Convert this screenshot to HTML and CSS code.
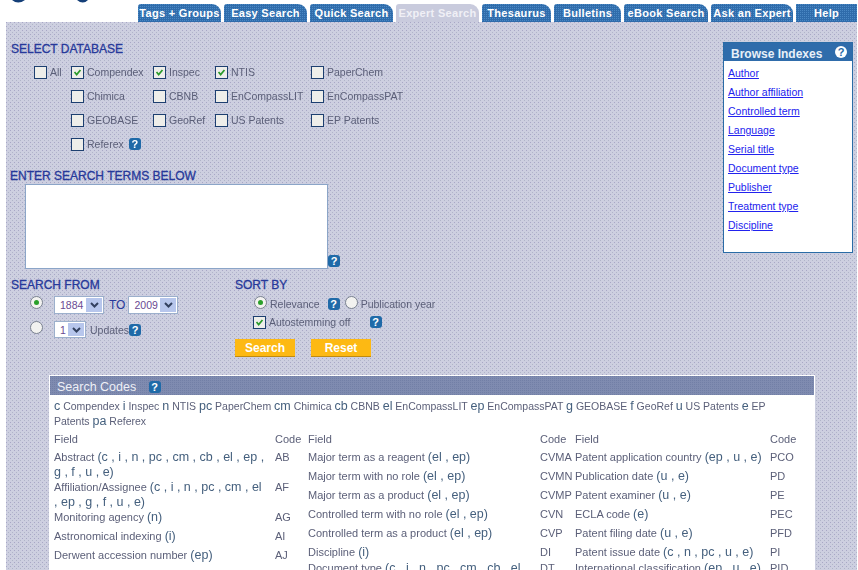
FILE: index.html
```html
<!DOCTYPE html>
<html lang="en">
<head>
    <meta charset="UTF-8">
    <title>Expert Search</title>
    <link rel="stylesheet" href="styles.css">
</head>
<body>
<div class="top">
    <svg class="logo" width="132" height="22" viewBox="0 0 132 22">
        <path d="M6 0 Q12 5 19 0Z M71 0 Q77 5 82 0Z" fill="#143f78"/>
    </svg>
    <div class="tabs">
        <a class="tab">Tags + Groups</a>
        <a class="tab">Easy Search</a>
        <a class="tab">Quick Search</a>
        <a class="tab tab-on">Expert Search</a>
        <a class="tab tab-thes">Thesaurus</a>
        <a class="tab tab-bull">Bulletins</a>
        <a class="tab tab-ebook">eBook Search</a>
        <a class="tab tab-ask">Ask an Expert</a>
        <a class="tab tab-help">Help</a>
    </div>
</div>

<div class="page">
    <div class="upper">
        <div class="form">
            <h2 class="head">SELECT DATABASE</h2>
            <div class="dbs">
                <label class="db"><span class="check"></span>All</label>
                <label class="db"><span class="check"><svg viewBox="0 0 13 13"><path d="M3 6l2.5 3L10 3.5" fill="none" stroke="#2a9a2a" stroke-width="2"/></svg></span>Compendex</label>
                <label class="db"><span class="check"><svg viewBox="0 0 13 13"><path d="M3 6l2.5 3L10 3.5" fill="none" stroke="#2a9a2a" stroke-width="2"/></svg></span>Inspec</label>
                <label class="db"><span class="check"><svg viewBox="0 0 13 13"><path d="M3 6l2.5 3L10 3.5" fill="none" stroke="#2a9a2a" stroke-width="2"/></svg></span>NTIS</label>
                <label class="db"><span class="check"></span>PaperChem</label>

                <span></span>
                <label class="db"><span class="check"></span>Chimica</label>
                <label class="db"><span class="check"></span>CBNB</label>
                <label class="db"><span class="check"></span>EnCompassLIT</label>
                <label class="db"><span class="check"></span>EnCompassPAT</label>

                <span></span>
                <label class="db"><span class="check"></span>GEOBASE</label>
                <label class="db"><span class="check"></span>GeoRef</label>
                <label class="db"><span class="check"></span>US Patents</label>
                <label class="db"><span class="check"></span>EP Patents</label>

                <span></span>
                <label class="db db-wide"><span class="check"></span>Referex <span class="help">?</span></label>
            </div>

            <h2 class="head head-terms">ENTER SEARCH TERMS BELOW</h2>
            <div class="terms">
                <textarea class="box"></textarea>
                <span class="help">?</span>
            </div>

            <div class="limits">
                <div class="from">
                    <h2 class="head">SEARCH FROM</h2>
                    <div class="line line-years">
                        <span class="radio radio-on"></span>
                        <div class="select select-year"><span>1884</span><i class="arrow"><svg width="9" height="6" viewBox="0 0 9 6"><path d="M1 1l3.5 3.5L8 1" fill="none" stroke="#33415f" stroke-width="2"/></svg></i></div>
                        <span class="to">TO</span>
                        <div class="select select-year"><span>2009</span><i class="arrow"><svg width="9" height="6" viewBox="0 0 9 6"><path d="M1 1l3.5 3.5L8 1" fill="none" stroke="#33415f" stroke-width="2"/></svg></i></div>
                    </div>
                    <div class="line line-updates">
                        <span class="radio"></span>
                        <div class="select select-num"><span>1</span><i class="arrow"><svg width="9" height="6" viewBox="0 0 9 6"><path d="M1 1l3.5 3.5L8 1" fill="none" stroke="#33415f" stroke-width="2"/></svg></i></div>
                        <span class="lbl lbl-upd">Updates</span><span class="help">?</span>
                    </div>
                </div>
                <div class="sort">
                    <h2 class="head">SORT BY</h2>
                    <div class="sort-line sort-first">
                        <span class="radio radio-on"></span><span class="lbl lbl-rel">Relevance</span>
                        <span class="help">?</span>
                        <span class="radio radio-pub"></span><span class="lbl">Publication year</span>
                    </div>
                    <div class="sort-line sort-stem">
                        <span class="check"><svg viewBox="0 0 13 13"><path d="M3 6l2.5 3L10 3.5" fill="none" stroke="#2a9a2a" stroke-width="2"/></svg></span><span class="lbl lbl-stem">Autostemming off</span>
                        <span class="help">?</span>
                    </div>
                    <div class="btns">
                        <button class="btn">Search</button>
                        <button class="btn">Reset</button>
                    </div>
                </div>
            </div>
        </div>

        <aside class="browse">
            <div class="browse-top">Browse Indexes <span class="help help-white">?</span></div>
            <a href="#">Author</a>
            <a href="#">Author affiliation</a>
            <a href="#">Controlled term</a>
            <a href="#">Language</a>
            <a href="#">Serial title</a>
            <a href="#">Document type</a>
            <a href="#">Publisher</a>
            <a href="#">Treatment type</a>
            <a href="#">Discipline</a>
        </aside>
    </div>

    <section class="codes">
        <div class="codes-top">Search Codes <span class="help">?</span></div>
        <p class="legend"><b>c</b> Compendex <b>i</b> Inspec <b>n</b> NTIS <b>pc</b> PaperChem <b>cm</b> Chimica <b>cb</b> CBNB <b>el</b> EnCompassLIT <b>ep</b> EnCompassPAT <b>g</b> GEOBASE <b>f</b> GeoRef <b>u</b> US Patents <b>e</b> EP Patents <b>pa</b> Referex</p>
        <div class="cols">
            <div class="col col-a">
                <span class="th">Field</span><span class="th">Code</span>
                <span class="f">Abstract <b>(c , i , n , pc , cm , cb , el , ep ,<br>g , f , u , e)</b></span><span class="c">AB</span>
                <span class="f">Affiliation/Assignee <b>(c , i , n , pc , cm , el<br>, ep , g , f , u , e)</b></span><span class="c">AF</span>
                <span class="f">Monitoring agency <b>(n)</b></span><span class="c">AG</span>
                <span class="f">Astronomical indexing <b>(i)</b></span><span class="c">AI</span>
                <span class="f">Derwent accession number <b>(ep)</b></span><span class="c">AJ</span>
            </div>
            <div class="col col-b">
                <span class="th">Field</span><span class="th">Code</span>
                <span class="f">Major term as a reagent <b>(el , ep)</b></span><span class="c">CVMA</span>
                <span class="f">Major term with no role <b>(el , ep)</b></span><span class="c">CVMN</span>
                <span class="f">Major term as a product <b>(el , ep)</b></span><span class="c">CVMP</span>
                <span class="f">Controlled term with no role <b>(el , ep)</b></span><span class="c">CVN</span>
                <span class="f">Controlled term as a product <b>(el , ep)</b></span><span class="c">CVP</span>
                <span class="f short">Discipline <b>(i)</b></span><span class="c short">DI</span>
                <span class="f">Document type <b>(c , i , n , pc , cm , cb , el</b></span><span class="c">DT</span>
            </div>
            <div class="col col-c">
                <span class="th">Field</span><span class="th">Code</span>
                <span class="f">Patent application country <b>(ep , u , e)</b></span><span class="c">PCO</span>
                <span class="f">Publication date <b>(u , e)</b></span><span class="c">PD</span>
                <span class="f">Patent examiner <b>(u , e)</b></span><span class="c">PE</span>
                <span class="f">ECLA code <b>(e)</b></span><span class="c">PEC</span>
                <span class="f">Patent filing date <b>(u , e)</b></span><span class="c">PFD</span>
                <span class="f short">Patent issue date <b>(c , n , pc , u , e)</b></span><span class="c short">PI</span>
                <span class="f">International classification <b>(ep , u , e)</b></span><span class="c">PID</span>
            </div>
        </div>
    </section>
</div>
</body>
</html>
```

FILE: styles.css
```css
html, body {
    margin: 0;
    height: 570px;
    overflow: hidden;
    background: #fff;
}
body {
    font-family: "Liberation Sans", Arial, sans-serif;
    font-size: 10.5px;
    color: #5b5f78;
}

/* top bar */
.top {
    display: flex;
    height: 22px;
}
.logo {
    margin-left: 6px;
    flex: none;
}
.tabs {
    display: flex;
    gap: 3px;
    padding-top: 4px;
}
.tab {
    width: 83px;
    height: 18px;
    line-height: 18px;
    text-align: center;
    color: #fff;
    font-size: 11px;
    font-weight: bold;
    letter-spacing: 0.3px;
    white-space: nowrap;
    border-radius: 3px 9px 0 0;
    background-color: #2f6cab;
    background-image: conic-gradient(at 1px 1px, transparent 75%, #4a88c4 0);
    background-size: 2px 2px;
}
.tab-on {
    background-color: #c9cbdd;
    background-image: none;
    color: #f0f0f6;
}
.tab-thes { width: 69px; }
.tab-bull { width: 67px; }
.tab-ebook { width: 84px; }
.tab-ask { width: 82px; }
.tab-help { width: 61px; border-radius: 0; }

/* dotted page */
.page {
    margin: 0 1px 0 6px;
    padding: 19px 4px 0 5px;
    height: 529px;
    background-color: #cdcfe0;
    background-image:
        conic-gradient(at 1px 1px, transparent 75%, #a8a7c6 0),
        conic-gradient(at 1px 1px, transparent 75%, #b0b5c8 0);
    background-size: 4px 4px;
    background-position: 0 0, 2px 2px;
}
.upper {
    display: flex;
    justify-content: space-between;
    align-items: flex-start;
}
.form {
    width: 700px;
}
.head {
    margin: 0;
    font-size: 12px;
    line-height: 16px;
    font-weight: normal;
    color: #26389a;
    -webkit-text-stroke: 0.3px #26389a;
    white-space: nowrap;
}
.head-terms {
    margin: 12px 0 0 -1px;
}

/* database checkboxes */
.dbs {
    display: grid;
    grid-template-columns: 37px 82px 62px 96px auto;
    grid-auto-rows: 24px;
    margin: 3px 0 0 23px;
}
.db {
    display: flex;
    align-items: center;
    white-space: nowrap;
}
.db-wide { grid-column: span 3; }
.db .help { margin-left: 5px; }
.check {
    width: 11px;
    height: 11px;
    margin-right: 3px;
    flex: none;
    border: 1px solid #1d3f70;
    background: #eeeeea;
}
.check svg {
    display: block;
    width: 11px;
    height: 11px;
}
.help {
    display: inline-block;
    width: 12px;
    height: 12px;
    line-height: 12px;
    text-align: center;
    flex: none;
    border-radius: 3px;
    background: #1f6aa8;
    color: #fff;
    font-size: 11px;
    font-weight: bold;
}

/* soft edge on the small grey text, as in the reference */
.db,
.lbl,
.legend,
.th,
.f,
.c {
    filter: blur(0.3px);
}

/* search box */
.terms {
    display: flex;
    align-items: flex-end;
    margin-left: 14px;
}
.box {
    display: block;
    width: 301px;
    height: 83px;
    padding: 0;
    border: 1px solid #8ba5c8;
    background: #fff;
    resize: none;
    outline: none;
}
.terms .help { margin: 0 0 2px 0; }

/* from / sort */
.limits {
    display: flex;
    margin-top: 8px;
}
.from {
    width: 224px;
    flex: none;
}
.line {
    display: flex;
    align-items: flex-start;
    padding-left: 19px;
}
.line-years { margin-top: 3px; }
.line-updates { margin-top: 7px; }
.line .to,
.line .lbl,
.line .help {
    align-self: center;
}
.radio {
    position: relative;
    width: 11px;
    height: 11px;
    flex: none;
    border: 1px solid #7a8290;
    border-radius: 50%;
    background: #f2f2f0;
}
.radio-on::after {
    content: "";
    position: absolute;
    left: 3px;
    top: 3px;
    width: 5px;
    height: 5px;
    border-radius: 50%;
    background: #2aa02a;
}
.select {
    display: flex;
    align-items: center;
    justify-content: space-between;
    box-sizing: border-box;
    height: 18px;
    margin-left: 11px;
    padding: 1px 1px 1px 5px;
    border: 1px solid #9cb0cc;
    background: #fff;
    color: #6a4a92;
}
.select-year { width: 50px; }
.select-year + .to + .select-year { margin-left: 3px; }
.select-num { width: 32px; height: 17px; }
.arrow {
    display: flex;
    align-items: center;
    justify-content: center;
    width: 16px;
    height: 100%;
    background: #b7c6ec;
}
.to {
    margin-left: 5px;
    font-size: 12px;
    color: #26389a;
}
.lbl {
    white-space: nowrap;
}
.lbl-upd { margin-left: 4px; }
.sort {
    flex: 1;
}
.sort-line {
    display: flex;
    align-items: center;
    height: 18px;
    margin-left: 19px;
}
.sort-first { margin-top: 2px; }
.sort-first .radio { align-self: flex-start; margin-top: 1px; }
.lbl-rel { margin: 0 8px 0 3px; }
.radio-pub { margin: 0 3px 0 5px; }
.sort-stem { margin-left: 18px; }
.lbl-stem { margin-right: 19px; }
.btns {
    display: flex;
    gap: 16px;
    margin-top: 8px;
}
.btn {
    width: 60px;
    height: 18px;
    padding: 0;
    border: none;
    border-bottom: 1px solid #c08a10;
    background: #fdb913;
    color: #fff;
    font-family: inherit;
    font-size: 12px;
    font-weight: bold;
}

/* browse indexes */
.browse {
    display: flex;
    flex-direction: column;
    box-sizing: border-box;
    width: 130px;
    height: 211px;
    margin-top: 1px;
    border: 1px solid #2a6ca6;
    background: #fff;
}
.browse-top {
    display: flex;
    align-items: center;
    justify-content: space-between;
    box-sizing: border-box;
    height: 18px;
    margin-bottom: 3px;
    padding: 3px 5px 0 7px;
    background: #2f6cab;
    color: #e8f0f8;
    font-size: 12px;
    font-weight: bold;
}
.help-white {
    margin-top: -4px;
    border-radius: 50%;
    background: #fff;
    color: #1f6aa8;
}
.browse a {
    height: 19px;
    line-height: 19px;
    margin-left: 4px;
    color: #2222ee;
    text-decoration: underline;
}

/* search codes */
.codes {
    width: 764px;
    margin: 18px 0 0 38px;
    border: 1px solid #fff;
    background: #fff;
}
.codes-top {
    height: 19px;
    line-height: 22px;
    padding-left: 7px;
    color: #eef0f6;
    font-size: 12.5px;
    background-color: #7f8bb0;
    background-image: conic-gradient(at 1px 1px, transparent 75%, #727fa6 0);
    background-size: 2px 2px;
}
.codes-top .help { margin-left: 9px; }
.legend {
    margin: 4px 0 3px;
    padding: 0 40px 0 4px;
    line-height: 15px;
}
.legend b,
.f b {
    font-size: 12.5px;
    font-weight: normal;
    color: #45607e;
}
.cols {
    display: flex;
    padding-left: 4px;
}
.col {
    display: grid;
    grid-auto-rows: min-content;
    line-height: 15px;
    font-size: 11px;
}
.col-a { width: 254px; grid-template-columns: 221px 33px; }
.col-b { width: 267px; grid-template-columns: 232px 35px; }
.col-c { width: 240px; grid-template-columns: 195px 45px; }
.th {
    height: 18px;
}
.f, .c {
    min-height: 19px;
}
.short {
    min-height: 16px;
}
```
